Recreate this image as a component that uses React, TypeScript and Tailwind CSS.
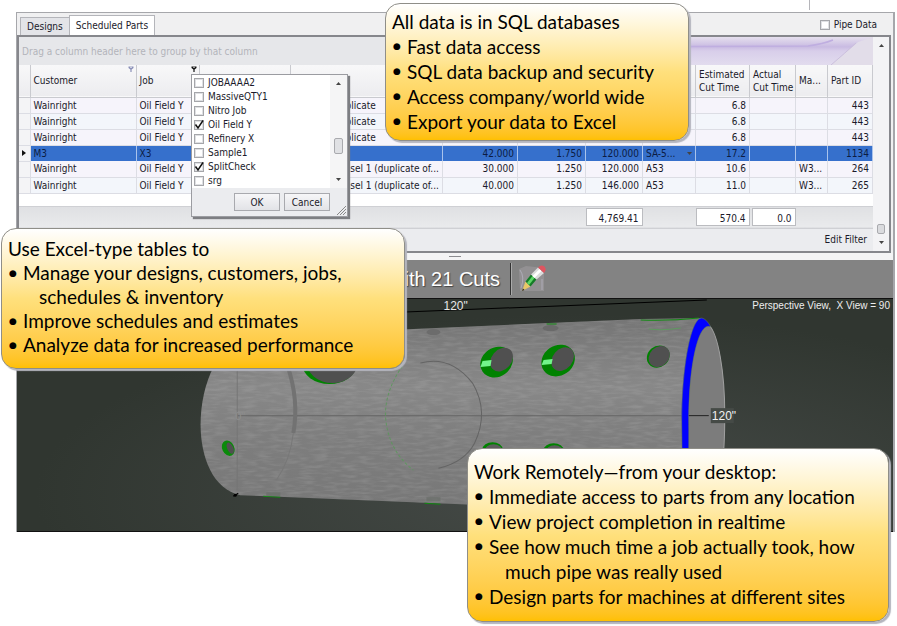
import type { ReactNode } from "react"

const parts = [
  { customer: "Wainright", job: "Oil Field Y", name: "plicate", dia: "", wall: "", len: "", mat: "", est: "6.8", act: "", ma: "", id: "443" },
  { customer: "Wainright", job: "Oil Field Y", name: "plicate", dia: "", wall: "", len: "", mat: "", est: "6.8", act: "", ma: "", id: "443" },
  { customer: "Wainright", job: "Oil Field Y", name: "plicate", dia: "", wall: "", len: "", mat: "", est: "6.8", act: "", ma: "", id: "443" },
  { customer: "M3", job: "X3", name: "", dia: "42.000", wall: "1.750", len: "120.000", mat: "SA-5...", est: "17.2", act: "", ma: "", id: "1134", selected: true },
  { customer: "Wainright", job: "Oil Field Y", name: "ssel 1 (duplicate of...", dia: "30.000", wall: "1.250", len: "120.000", mat: "A53", est: "10.6", act: "", ma: "W3...", id: "264" },
  { customer: "Wainright", job: "Oil Field Y", name: "ssel 1 (duplicate of...", dia: "40.000", wall: "1.250", len: "146.000", mat: "A53", est: "11.0", act: "", ma: "W3...", id: "265" },
]

const jobs = [
  { name: "JOBAAAA2", checked: false },
  { name: "MassiveQTY1", checked: false },
  { name: "Nitro Job", checked: false },
  { name: "Oil Field Y", checked: true },
  { name: "Refinery X", checked: false },
  { name: "Sample1", checked: false },
  { name: "SplitCheck", checked: true },
  { name: "srg", checked: false },
]

function CheckBox({ label, checked = false }: { label: string; checked?: boolean }) {
  return (
    <label className="flex items-center gap-1 whitespace-nowrap">
      <span className="relative flex">
        <input
          type="checkbox"
          defaultChecked={checked}
          className="peer size-[10px] appearance-none border border-[#a5a6aa] bg-white outline outline-[#dfe0e3] -outline-offset-2"
        />
        <svg viewBox="0 0 10 10" className="pointer-events-none absolute inset-0 hidden size-[10px] overflow-visible peer-checked:block">
          <path d="M1.5 4.5 L4 8 L9 0.5" fill="none" stroke="#111" strokeWidth="1.5" />
        </svg>
      </span>
      {label}
    </label>
  )
}

function FilterIcon({ color }: { color: string }) {
  return (
    <svg viewBox="0 0 6 6" className="absolute top-[1px] right-[2px] size-[6px]">
      <path d="M0.5 0.5 H5.5 V2 L3.6 3.5 V6 H2.4 V3.5 L0.5 2 Z" fill={color} />
      <path d="M2 1.3 H4" stroke="#fff" strokeWidth="0.7" />
    </svg>
  )
}

function Arrow({ up = false }: { up?: boolean }) {
  return (
    <svg viewBox="0 0 5 3" className="h-[3px] w-[5px]">
      <path d={up ? "M0 3 L2.5 0 L5 3 Z" : "M0 0 L2.5 3 L5 0 Z"} fill="#444" />
    </svg>
  )
}

function PartsTable() {
  const head = "relative border-r border-[#c9cacf] px-[3px] text-left align-middle font-normal"
  const total = "h-[18px] border border-[#bbbcc0] bg-white pr-[3px] pt-[2px] leading-[16px] text-right"
  return (
    <table className="w-full table-fixed border-collapse">
      <colgroup>
        <col className="w-[11px]" />
        <col className="w-[106px]" />
        <col className="w-[63px]" />
        <col className="w-[91px]" />
        <col />
        <col className="w-[75px]" />
        <col className="w-[68px]" />
        <col className="w-[57px]" />
        <col className="w-[53px]" />
        <col className="w-[54px]" />
        <col className="w-[46px]" />
        <col className="w-[32px]" />
        <col className="w-[45px]" />
      </colgroup>
      <thead>
        <tr className="h-[32px] border-b border-[#c9cacf] bg-linear-to-b from-[#f8f8f9] to-[#ececef] leading-[13px]">
          <th className={head}></th>
          <th className={head}>Customer<FilterIcon color="#8a90b8" /></th>
          <th className={head}>Job<FilterIcon color="#111" /></th>
          <th className={head}></th>
          <th className={head}></th>
          <th className={head}></th>
          <th className={head}></th>
          <th className={head}></th>
          <th className={head}></th>
          <th className={head + " whitespace-nowrap"}>Estimated<br />Cut Time</th>
          <th className={head + " whitespace-nowrap"}>Actual<br />Cut Time</th>
          <th className={head + " whitespace-nowrap"}>Ma...</th>
          <th className={head + " whitespace-nowrap"}>Part ID</th>
        </tr>
      </thead>
      <tbody>
        {parts.map((r, i) => {
          const cell = r.selected
            ? "overflow-hidden border-r border-[#a9c3ec] bg-[#3670cc] px-[3px] py-0 text-[#0c1c42]"
            : "overflow-hidden border-r border-b border-[#dcdde4] px-[3px] py-0"
          return (
            <tr
              key={i}
              className={
                "h-[16px] whitespace-nowrap leading-[15px] " + (i % 2 ? "bg-[#f3f6fb]" : "bg-[#f6f4fb]")
              }
            >
              <td className="border-r border-b border-[#dcdde4] bg-[#f4f4f6] p-0">
                {r.selected && (
                  <svg viewBox="0 0 4 6" className="mx-auto h-[6px] w-[4px]">
                    <path d="M0 0 L4 3 L0 6 Z" fill="#111" />
                  </svg>
                )}
              </td>
              <td className={cell}>{r.customer}</td>
              <td className={cell}>{r.job}</td>
              <td className={cell}></td>
              <td className={cell + " pl-[55px]"}>{r.name}</td>
              <td className={cell + " text-right"}>{r.dia}</td>
              <td className={cell + " text-right"}>{r.wall}</td>
              <td className={cell + " text-right"}>{r.len}</td>
              <td className={cell}>
                {r.selected ? (
                  <span className="flex items-center justify-between">
                    <select aria-label="Material" className="h-[15px] w-[40px] appearance-none leading-[15px]">
                      <option>{r.mat}</option>
                    </select>
                    <Arrow />
                  </span>
                ) : (
                  r.mat
                )}
              </td>
              <td className={cell + " text-right"}>{r.est}</td>
              <td className={cell + " text-right"}>{r.act}</td>
              <td className={cell}>{r.ma}</td>
              <td className={cell + " text-right"}>{r.id}</td>
            </tr>
          )
        })}
      </tbody>
      <tfoot>
        <tr className="h-[13px] bg-white">
          <td colSpan={13}></td>
        </tr>
        <tr className="h-[22px] border-y border-[#cfd0d4] bg-linear-to-b from-[#dfe0e3] to-[#e9eaec]">
          <td colSpan={7}></td>
          <td className="p-0"><div className={total}>4,769.41</div></td>
          <td></td>
          <td className="p-0"><div className={total}>570.4</div></td>
          <td className="p-0"><div className={total + " ml-[2px]"}>0.0</div></td>
          <td colSpan={2}></td>
        </tr>
      </tfoot>
    </table>
  )
}

function JobFilter() {
  return (
    <div className="absolute top-[74px] left-[191px] w-[157px] border border-[#9b9ca1] bg-[#ebecef] shadow-[2px_2px_1px_#7d7e82]">
      <div className="flex justify-between bg-white">
        <div className="flex flex-col pt-px pl-[2px]">
          {jobs.map((job) => (
            <div key={job.name} className="h-[14px] leading-[14px]">
              <CheckBox label={job.name} checked={job.checked} />
            </div>
          ))}
        </div>
        <div className="flex w-[17px] flex-col items-center bg-[#f5f5f6] py-[7px]">
          <Arrow up />
          <div className="mt-[53px] h-[16px] w-[9px] rounded-xs border border-[#a9aaae] bg-[#e0e1e4]"></div>
          <div className="mt-auto flex"><Arrow /></div>
        </div>
      </div>
      <div className="relative flex justify-end gap-1 pt-[5px] pr-[17px] pb-[5px]">
        <button className="h-[18px] w-[46px] border border-[#a8a9ae] bg-linear-to-b from-[#f6f6f8] to-[#e2e3e7]">OK</button>
        <button className="h-[18px] w-[46px] border border-[#a8a9ae] bg-linear-to-b from-[#f6f6f8] to-[#e2e3e7]">Cancel</button>
        <svg viewBox="0 0 9 9" className="absolute right-[1px] bottom-[1px] size-[9px]">
          <path d="M0 9 L9 0 M3 9 L9 3 M6 9 L9 6" stroke="#888" strokeWidth="1" />
        </svg>
      </div>
    </div>
  )
}

function PencilIcon() {
  return (
    <svg viewBox="0 0 28 28" className="size-[28px]">
      <path d="M1 4 L8 1 L26 3 V26 H2 Z" fill="#a3a0a4" opacity="0.5" />
      <path d="M2 5 Q7 12 3 23 M24 14 V25" stroke="#b4b3c0" strokeWidth="0.8" fill="none" />
      <path d="M7.500 16.500 L12.500 21.500 L4 26 Z" fill="#e8c868" />
      <path d="M4 26 L5 23.500 L6.500 25 Z" fill="#222" />
      <path d="M7.500 16.500 L13 9.500 L18.500 14.500 L12.500 21.500 Z" fill="#157c27" />
      <path d="M9 18 L14.500 11 L16.500 13 L11 20 Z" fill="#5bd564" />
      <path d="M13 9.500 L20 2.500 L26 8 L18.500 14.500 Z" fill="#dcdcdc" />
      <path d="M14.500 11 L21.500 4 L23.500 6 L16.500 13 Z" fill="#fff" />
      <path d="M20 2.500 Q23 -1 26.500 1.500 Q29 5 26 8 Z" fill="#df5560" />
    </svg>
  )
}

function PipeView() {
  return (
    <svg viewBox="17 299 875 232" preserveAspectRatio="xMinYMin slice" className="block h-[232px] w-full">
      <defs>
        <radialGradient id="room" cx="0.62" cy="0.65" r="0.6">
          <stop offset="0" stopColor="#464b48" />
          <stop offset="1" stopColor="#303630" />
        </radialGradient>
        <linearGradient id="steel" x1="0" y1="0" x2="0" y2="1">
          <stop offset="0" stopColor="#757575" />
          <stop offset="0.35" stopColor="#888" />
          <stop offset="0.6" stopColor="#7e7e7e" />
          <stop offset="1" stopColor="#777" />
        </linearGradient>
        <filter id="grain" x="0" y="0" width="1" height="1">
          <feTurbulence type="fractalNoise" baseFrequency="0.07 0.35" numOctaves="2" seed="4" />
          <feColorMatrix values="0 0 0 0 0.8  0 0 0 0 0.8  0 0 0 0 0.8  1.6 0 0 0 -0.65" />
          <feComposite in2="SourceGraphic" operator="in" />
        </filter>
      </defs>
      <rect x="17" y="299" width="900" height="300" fill="url(#room)" />
      <path d="M380 313 L706 300" stroke="#000" strokeWidth="1" />
      <path d="M250 336 C192 345 180 482 240 495 L700 514 Q724 500 724 415 Q722 330 700 318 L640 319 Z" fill="url(#steel)" />
      <path d="M250 336 C192 345 180 482 240 495 L700 514 Q724 500 724 415 Q722 330 700 318 L640 319 Z" filter="url(#grain)" opacity="0.18" />
      <path d="M640 320 Q670 321 698 318 M546 324 H556 M263 496 L280 497 M424 503 L440 504" stroke="#118a11" strokeWidth="1" fill="none" />
      <path d="M648 329 Q662 331 680 328" stroke="#5f9960" fill="none" />
      <ellipse cx="433" cy="332" rx="7" ry="3" fill="#6c6c6c" />
      <ellipse cx="550" cy="328" rx="8" ry="3" fill="#6a6a6a" />
      <path d="M266 492 H280 V496 H266 Z M426 497 H440 V501 H426 Z" fill="#6a6d6a" opacity="0.7" />
      <path d="M237 415.500 H681" stroke="#646464" strokeWidth="1" />
      <path d="M237 350 V490" stroke="#767676" strokeWidth="1" />
      <path d="M287 365 Q299 400 293 433" stroke="#727272" strokeWidth="4" fill="none" />
      <path d="M293 433 Q290 460 276 480" stroke="#787878" strokeWidth="1" fill="none" />
      <path d="M420 363 Q450 355 472 383 Q489 412 474 443 Q464 462 438 468" stroke="#646464" strokeWidth="1" fill="none" />
      <path d="M402 366 Q385 390 385 415 Q387 450 413 470" stroke="#5f965f" strokeWidth="1" strokeDasharray="3 2" fill="none" />
      <text x="235" y="420" fontSize="11" fill="#8e8e8e" fontFamily="Liberation Sans, sans-serif">0"</text>

      <ellipse cx="329" cy="364" rx="27" ry="20" fill="#008200" />
      <ellipse cx="332" cy="361" rx="26" ry="22" fill="#505050" />
      <ellipse cx="228" cy="448" rx="6" ry="8" fill="#0a8a0a" transform="rotate(-25 228 448)" />
      <ellipse cx="230" cy="448" rx="3" ry="6" fill="#505050" transform="rotate(-25 230 448)" />

      <ellipse cx="496" cy="362" rx="17" ry="14.5" fill="#008200" transform="rotate(-35 496 362)" />
      <ellipse cx="501" cy="359.500" rx="13" ry="10" fill="#505050" transform="rotate(-50 501 359.500)" />
      <path d="M482 361 L491 360 L490 366 L480 367 Z" fill="#72f58a" />
      <ellipse cx="557.500" cy="360.500" rx="17.500" ry="15" fill="#008200" transform="rotate(-35 557.500 360.500)" />
      <ellipse cx="562" cy="359" rx="13" ry="10" fill="#505050" transform="rotate(-50 562 359)" />
      <path d="M543 360 L552 359 L551 364 L541 365 Z" fill="#72f58a" />
      <ellipse cx="657.500" cy="356.500" rx="12" ry="10.500" fill="#008200" transform="rotate(-40 657.500 356.500)" />
      <ellipse cx="658.500" cy="356.500" rx="11.500" ry="9.500" fill="#505050" transform="rotate(-45 658.500 356.500)" />
      <ellipse cx="492" cy="449" rx="10" ry="7" fill="#008200" />
      <ellipse cx="493" cy="451" rx="9" ry="7" fill="#5c5c5c" />
      <ellipse cx="553" cy="450" rx="10" ry="7" fill="#008200" />
      <ellipse cx="554" cy="452" rx="9" ry="7" fill="#5c5c5c" />

      <path d="M709 326 C717 335 724 370 724 415 Q724 480 712 505 L688 505 V415 C688 370 694 326 709 326 Z" fill="#7c7c7c" />
      <path d="M709 326 C717 335 724 370 724 415 Q724 480 712 505" stroke="#a0a0a0" fill="none" />
      <path d="M682 510 L681 430 C680 375 689 318 701 318 Q706 319 710 327 C698 320 687 365 688 430 V510 Z" fill="#0000ff" stroke="#6d8050" strokeWidth="0.5" />
      <path d="M688 415.500 H708" stroke="#222" />
      <rect x="710" y="408" width="23" height="15" fill="#454a46" />
      <text x="711" y="420" fontSize="12" fill="#f2f2f2" fontFamily="Liberation Sans, sans-serif">120"</text>
      <text x="443" y="310" fontSize="12" fill="#e8e8e8" fontFamily="Liberation Sans, sans-serif">120"</text>
      <circle cx="235" cy="495" r="1.500" fill="#000" />
      <path d="M233 496 L238 493" stroke="#000" />
      <text x="889" y="309" fontSize="10" textAnchor="end" fill="#eee" fontFamily="Liberation Sans, sans-serif" xmlSpace="preserve">Perspective View,  X View = 90</text>
    </svg>
  )
}

function Callout({ title, className, children }: { title: string; className: string; children: ReactNode }) {
  return (
    <section
      className={
        "absolute rounded-[15px] border border-[#8f8e88] bg-linear-to-b from-white via-[#ffe07c] via-50% to-[#ffc000] pl-[6px] font-['Lato','Liberation_Sans',sans-serif] text-[19px] whitespace-nowrap text-black shadow-[2px_2px_1px_#b4b5be] " +
        className
      }
    >
      <h2>{title}</h2>
      <ul>{children}</ul>
    </section>
  )
}

function Point({ children }: { children: ReactNode }) {
  return (
    <li className="flex">
      <span className="w-[15px] pl-px font-['DejaVu_Sans'] text-[9px]">●</span>
      <span className="pl-4 -indent-4">{children}</span>
    </li>
  )
}

export default function App() {
  return (
    <div className="relative min-h-screen overflow-hidden bg-white pt-3 pr-[2px] pl-4 font-['DejaVu_Sans_Condensed','DejaVu_Sans',sans-serif] text-[10px] text-[#1a1a2a]">
      <div className="absolute top-0 left-[809px] h-[10px] w-px bg-[#b5b5ba]"></div>
      <main className="border-t border-r-2 border-l border-[#a6a7ab] bg-[#f0f0f1]">
        <header className="flex h-[22px] items-end justify-between pr-[16px] pl-[3px]">
          <div role="tablist" className="flex items-end">
            <button role="tab" className="h-[18px] border border-r-0 border-b-0 border-[#b4b5ba] bg-[#e3e4e8] px-[6px]">Designs</button>
            <button role="tab" aria-selected="true" className="h-[20px] border border-b-0 border-[#b4b5ba] bg-white px-[6px]">Scheduled Parts</button>
          </div>
          <div className="pb-[3px]"><CheckBox label="Pipe Data" /></div>
        </header>

        <section className="mr-[2px] flex border-2 border-[#86878c] bg-[#f3f3f5]">
          <div className="min-w-0 flex-1">
            <div className="flex h-[28px] items-center justify-between bg-[#e6e7ea] pl-[3px] text-[#b3b4ba]">
              <span>Drag a column header here to group by that column</span>
              <svg viewBox="0 0 320 28" preserveAspectRatio="none" className="h-[28px] w-[320px]">
                <defs>
                  <linearGradient id="lilac" x1="0" y1="0" x2="0" y2="1">
                    <stop offset="0" stopColor="#e6e0ee" />
                    <stop offset="0.35" stopColor="#c9bbe2" />
                    <stop offset="0.5" stopColor="#d8ceea" />
                    <stop offset="1" stopColor="#e2dcee" />
                  </linearGradient>
                </defs>
                <rect width="320" height="28" fill="url(#lilac)" />
                <path d="M0 10 L255 9 Q270 7 280 3" stroke="#bfaee0" strokeWidth="1.5" fill="none" />
                <path d="M278 28 L305 5 L320 0 V28 Z" fill="#e2dde9" />
                <path d="M278 28 Q292 16 303 6" stroke="#cbbfdd" fill="none" />
              </svg>
            </div>
            <PartsTable />
            <div className="flex h-[22px] items-center justify-end bg-[#ebecef] pr-[6px]">
              <button>Edit Filter</button>
            </div>
          </div>
          <div className="flex w-[16px] flex-col items-center py-[7px]">
            <Arrow up />
            <div className="mt-auto mb-[7px] h-[10px] w-[8px] rounded-xs border border-[#a9aaae] bg-[#dadbde]"></div>
            <Arrow />
          </div>
        </section>

        <div className="flex h-[7px] items-center justify-center bg-[#f4f4f5]">
          <div className="h-px w-[12px] bg-[#8c8c90]"></div>
        </div>

        <section className="border-b border-[#111]">
          <div className="flex h-[39px] items-center border-b border-[#111] bg-[#838383] pl-[373px]">
            <h1 className="font-['Liberation_Sans',Arial,sans-serif] text-[20px] whitespace-nowrap text-white [text-shadow:1px_1px_1px_#444]">with 21 Cuts</h1>
            <div className="mr-[6px] ml-[10px] h-[32px] w-[2px] border-r border-[#aaa] bg-[#333]"></div>
            <button aria-label="Edit"><PencilIcon /></button>
          </div>
          <PipeView />
        </section>
      </main>

      <JobFilter />

      <Callout title="All data is in SQL databases" className="top-[3px] left-[385px] w-[304px] pt-[5px] pb-[6px] leading-[25px]">
        <Point>Fast data access</Point>
        <Point>SQL data backup and security</Point>
        <Point>Access company/world wide</Point>
        <Point>Export your data to Excel</Point>
      </Callout>
      <Callout title="Use Excel-type tables to" className="top-[228px] left-[1px] w-[404px] pt-[8px] pb-[11px] leading-[24px]">
        <Point>Manage your designs, customers, jobs,<br />schedules &amp; inventory</Point>
        <Point>Improve schedules and estimates</Point>
        <Point>Analyze data for increased performance</Point>
      </Callout>
      <Callout title="Work Remotely—from your desktop:" className="top-[448px] left-[467px] w-[422px] pt-[10px] pb-[12px] leading-[25px]">
        <Point>Immediate access to parts from any location</Point>
        <Point>View project completion in realtime</Point>
        <Point>See how much time a job actually took, how<br />much pipe was really used</Point>
        <Point>Design parts for machines at different sites</Point>
      </Callout>
    </div>
  )
}
